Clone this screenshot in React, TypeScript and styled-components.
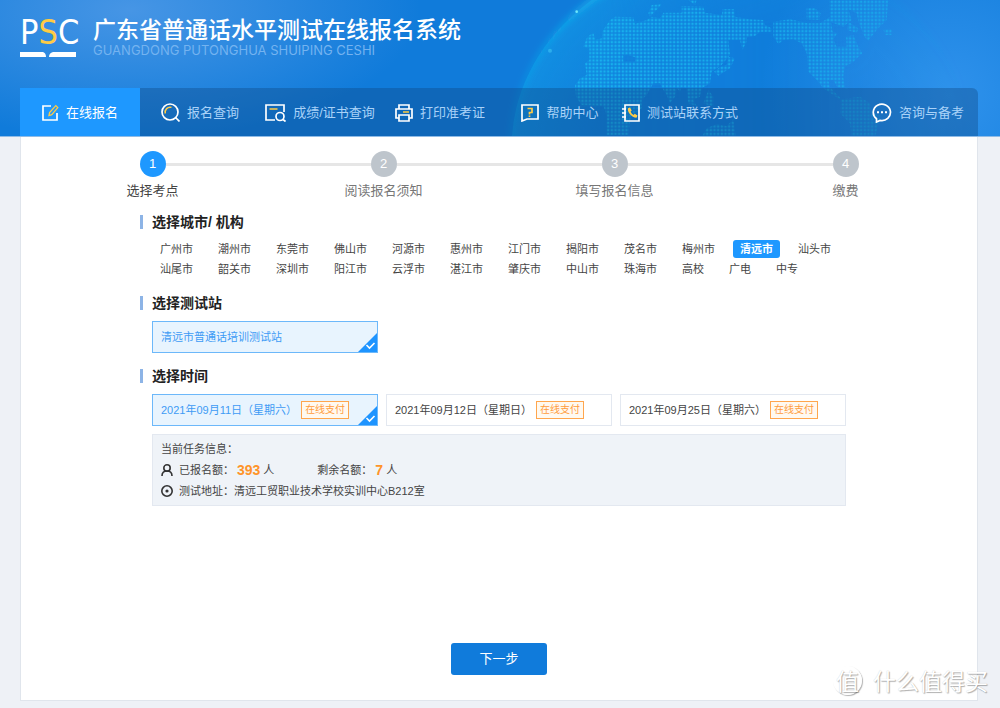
import React, { useState } from 'react';
import styled, { createGlobalStyle, css } from 'styled-components';

const GlobalStyle = createGlobalStyle`
  *, *::before, *::after { box-sizing: border-box; }
  body {
    margin: 0;
    background: #eef1f6;
    color: #333;
    font: 11px/16px "Liberation Sans", "Noto Sans CJK SC", sans-serif;
  }
  button { font: inherit; margin: 0; cursor: pointer; }
  ul, ol, h1, h2, p { margin: 0; padding: 0; list-style: none; font-weight: normal; }
`;

const Page = styled.div`
  position: relative;
  display: flex;
  flex-direction: column;
  min-height: 100vh;
`;

const Header = styled.header`
  position: relative;
  overflow: hidden;
  padding: 16px 22px 0 20px;
  border-bottom: 1px solid #8fbbe6;
  background:
    radial-gradient(ellipse 290px 130px at 130px 10px, rgba(84, 156, 232, 0.8), rgba(84, 156, 232, 0) 100%),
    radial-gradient(circle 190px at calc(100% - 50px) 95px, #2f92ec, rgba(47, 146, 236, 0)),
    #107bda;
`;

const Globe = styled.svg`
  position: absolute;
  top: 0;
  right: 0;
  width: 500px;
  height: 137px;
`;

const Brand = styled.div`
  position: relative;
  display: flex;
  gap: 17px;
  height: 72px;
`;

const Logo = styled.div`
  width: 56px;
  color: #fff;
  font: 34px/32px "DejaVu Sans Condensed", "Noto Sans CJK SC", sans-serif;
`;

const LogoLetters = styled.div`
  height: 36px;
  white-space: nowrap;
  em { color: #ffcb45; font-style: normal; }
`;

const LogoBook = styled.svg`
  display: block;
  width: 56px;
  height: 5px;
`;

const Title = styled.h1`
  color: #fff;
  font: 500 23px/24px "Noto Sans CJK SC", sans-serif;
`;

const Subtitle = styled.p`
  padding-top: 3px;
  color: #74b3f0;
  font: 13px/14px Inter, "Liberation Sans", sans-serif;
`;

const Nav = styled.nav`
  position: relative;
  display: flex;
  height: 48px;
  border-radius: 0 6px 0 0;
  overflow: hidden;
  background: rgba(14, 70, 128, 0.36);
`;

const NavLink = styled.a<{ $active?: boolean; $end?: boolean }>`
  display: flex;
  flex: 0 0 120px;
  align-items: center;
  justify-content: center;
  gap: 7px;
  padding-top: 1px;
  color: ${p => (p.$active ? '#fff' : '#a9d2f8')};
  background: ${p => (p.$active ? '#1e98ff' : 'transparent')};
  font-size: 13px;
  text-decoration: none;
  white-space: nowrap;
  ${p => p.$end && css`margin-left: auto;`}
`;

const NavGlyph = styled.svg.attrs({ strokeWidth: 1.7 })`
  flex: none;
  fill: none;
  stroke: #fff;
  .accent { stroke: #ffcb45; }
`;

const Card = styled.main`
  display: flex;
  flex: 1;
  flex-direction: column;
  margin: 0 22px 7px 20px;
  padding: 14px 16px 25px;
  border: 1px solid #e0e5ec;
  border-top: 0;
  background: #fff;
`;

const Steps = styled.ol`
  display: grid;
  grid-template-columns: repeat(4, 1fr);
`;

const Step = styled.li<{ $active?: boolean }>`
  display: flex;
  flex-direction: column;
  gap: 4px;
  text-align: center;
  font-size: 13px;
  line-height: 20px;
  color: ${p => (p.$active ? '#444' : '#777')};
`;

const StepTrack = styled.div<{ $first?: boolean; $last?: boolean }>`
  display: flex;
  align-items: center;
  &::before, &::after { content: ''; flex: 1; height: 3px; background: #e6e6e6; }
  &::before { visibility: ${p => (p.$first ? 'hidden' : 'visible')}; }
  &::after { visibility: ${p => (p.$last ? 'hidden' : 'visible')}; }
`;

const StepDot = styled.span<{ $active?: boolean }>`
  width: 26px;
  height: 26px;
  border-radius: 50%;
  color: #fff;
  background: ${p => (p.$active ? '#1e98ff' : '#bec5cc')};
  font-size: 13px;
  line-height: 25px;
`;

const Body = styled.div`
  display: flex;
  flex-direction: column;
  padding: 0 115px;
`;

const SectionTitle = styled.h2`
  display: flex;
  align-items: center;
  gap: 9px;
  margin-left: -12px;
  font-size: 14px;
  font-weight: bold;
  line-height: 20px;
  color: #222;
  &::before { content: ''; width: 3px; height: 14px; background: #8db4e6; }
`;

const Section = styled.section`
  display: flex;
  flex-direction: column;
  gap: 8px;
  padding-top: 11px;
  & + & { padding-top: 13px; }
`;

const Cities = styled.ul`
  display: flex;
  flex-wrap: wrap;
  gap: 2px 11px;
  padding-left: 1px;
  padding-bottom: 2px;
`;

const City = styled.button<{ $active?: boolean }>`
  display: block;
  height: 18px;
  padding: 0 7px;
  border: 0;
  border-radius: 3px;
  line-height: 18px;
  color: ${p => (p.$active ? '#fff' : '#444')};
  background: ${p => (p.$active ? '#1e98ff' : 'transparent')};
  font-weight: ${p => (p.$active ? 'bold' : 'normal')};
`;

const Options = styled.div`
  display: grid;
  grid-template-columns: repeat(3, 1fr);
  gap: 8px;
`;

const Option = styled.button<{ $active?: boolean }>`
  position: relative;
  display: flex;
  align-items: center;
  gap: 4px;
  height: 32px;
  padding: 0 8px;
  border: 1px solid ${p => (p.$active ? '#6cb8fa' : '#e3e8f0')};
  color: ${p => (p.$active ? '#3e9bf5' : '#444')};
  background: ${p => (p.$active ? '#e8f4fe' : '#fff')};
  text-align: left;
  white-space: nowrap;
`;

const Corner = styled.svg`
  position: absolute;
  right: 0;
  bottom: 0;
  width: 19px;
  height: 19px;
`;

const Tag = styled.span`
  padding: 0 3px;
  border: 1px solid #ffa64d;
  color: #ff9c3b;
  font-size: 10px;
  line-height: 16px;
  background: #fff9f0;
`;

const Info = styled.div`
  display: flex;
  flex-direction: column;
  gap: 1px;
  height: 72px;
  padding: 4px 8px;
  border: 1px solid #e3e8f0;
  color: #444;
  background: #eff3f8;
`;

const InfoRow = styled.p`
  display: flex;
  align-items: center;
  gap: 3px;
  line-height: 20px;
  svg { flex: none; margin-right: 3px; fill: none; stroke: #333; stroke-width: 1.6; }
  strong { color: #ff9429; font-size: 14px; }
`;

const Remaining = styled.span`
  margin-left: 40px;
`;

const NextButton = styled.button`
  align-self: center;
  width: 96px;
  height: 32px;
  margin-top: auto;
  border: 0;
  border-radius: 3px;
  color: #fff;
  background: #107bdb;
  && { font-size: 13px; }
`;

const Watermark = styled.div`
  position: absolute;
  right: 12px;
  bottom: 12px;
  display: flex;
  align-items: center;
  gap: 11px;
  color: #fff;
  font: 23px/32px "Noto Sans CJK SC", sans-serif;
  text-shadow: 1px 1px 1px rgba(0, 0, 0, 0.3), 0 0 1px rgba(0, 0, 0, 0.2);
  pointer-events: none;
`;

const WatermarkSeal = styled.span`
  width: 29px;
  height: 29px;
  border: 1px solid #fff;
  border-radius: 50%;
  box-shadow: 1px 1px 1px rgba(0, 0, 0, 0.3);
  text-align: center;
  line-height: 26px;
`;

const EditIcon = () => (
  <NavGlyph width="17" height="17" viewBox="0 0 17 17">
    <path d="M9 2H1v14h14V9" />
    <path className="accent" strokeWidth="1.3" d="M7 11.500l.6-3L13.800 1.600l2 2L9.800 10.600z" />
  </NavGlyph>
);
const SearchIcon = () => (
  <NavGlyph width="19" height="19" viewBox="0 0 19 19">
    <circle cx="9" cy="9" r="8" />
    <path d="M14.500 14.500L18.500 18.500" />
    <path className="accent" strokeWidth="1.500" d="M4.300 10.500A5 5 0 0 1 10.500 4.400" />
  </NavGlyph>
);
const CertificateIcon = () => (
  <NavGlyph width="21" height="19" viewBox="0 0 21 19">
    <path d="M10 17H1V2h18v7" />
    <circle cx="15" cy="13.500" r="4" />
    <path d="M18 16.500l2.500 2" />
    <path className="accent" d="M4.500 6h8" />
  </NavGlyph>
);
const PrinterIcon = () => (
  <NavGlyph width="18" height="18" viewBox="0 0 18 18">
    <path d="M4 5V1h10v4M4 14H1V5h16v9h-3" />
    <path d="M4 11h10v6H4z" />
    <path className="accent" d="M8 8h6" />
  </NavGlyph>
);
const HelpIcon = () => (
  <NavGlyph width="18" height="19" viewBox="0 0 18 19">
    <path d="M1 2h16v14H6l-5 2z" />
    <path className="accent" d="M6.500 5.500H11v4H8.500v2M8.500 12.500v1.500" />
  </NavGlyph>
);
const PhoneBookIcon = () => (
  <NavGlyph width="18" height="18" viewBox="0 0 18 18">
    <path d="M3 1h14v16H3zM0 5h4M0 9h4M0 13h4" />
    <path d="M6 4.200c-1 3.500 3.500 9.200 8.500 9.600l1-2.300-2.800-1.700-1.200 1.100C10.200 10.400 9 8.800 8.600 7.600l1.100-1.200L8 3.600z" fill="#ffcb45" stroke="none" />
  </NavGlyph>
);
const ChatIcon = () => (
  <NavGlyph width="20" height="20" viewBox="0 0 20 20">
    <path d="M4.500 19v-3.200A8.600 8.200 0 1 1 8 17.400z" />
    <path d="M5 9.200h2M9 9.200h2M13 9.200h2" strokeWidth="2" />
  </NavGlyph>
);
const PersonIcon = () => (
  <svg width="12" height="12" viewBox="0 0 12 12">
    <circle cx="6" cy="4" r="3.200" />
    <path d="M1 12c0-3 2-5 5-5s5 2 5 5" />
  </svg>
);
const PinIcon = () => (
  <svg width="12" height="12" viewBox="0 0 12 12">
    <circle cx="6" cy="6" r="5.200" />
    <circle cx="6" cy="6" r="0.800" />
  </svg>
);
const Selected = () => (
  <Corner viewBox="0 0 19 19">
    <path d="M19 0v19H0z" fill="#1e94ff" />
    <path d="M8.500 12l3 3 5-5" fill="none" stroke="#fff" strokeWidth="1.600" />
  </Corner>
);

const WorldMap = () => (
  <Globe viewBox="0 0 1500 411" aria-hidden="true">
    <defs>
      <pattern id="dots" width="11" height="11" patternUnits="userSpaceOnUse">
        <rect x="2" y="2" width="7" height="7" fill="#19b4ee" />
      </pattern>
      <linearGradient id="rim" x1="0" y1="0" x2="1" y2="0">
        <stop offset="0" stopColor="#12a8ee" stopOpacity="0.4" />
        <stop offset="0.25" stopColor="#1cd0f6" stopOpacity="0.9" />
        <stop offset="0.6" stopColor="#12a8ee" stopOpacity="0.2" />
        <stop offset="1" stopColor="#12a8ee" stopOpacity="0" />
      </linearGradient>
      <radialGradient id="sea">
        <stop offset="0.6" stopColor="#14a0ea" stopOpacity="0.15" />
        <stop offset="1" stopColor="#14a8ec" stopOpacity="0.45" />
      </radialGradient>
      <linearGradient id="fade" x1="0" x2="1" y1="0" y2="0">
        <stop offset="0" stopColor="#fff" />
        <stop offset="0.5" stopColor="#fff" stopOpacity="0.8" />
        <stop offset="1" stopColor="#fff" stopOpacity="0.5" />
      </linearGradient>
      <linearGradient id="seaFade" x1="0" x2="1" y1="0" y2="0">
        <stop offset="0.2" stopColor="#fff" />
        <stop offset="0.75" stopColor="#fff" stopOpacity="0.1" />
      </linearGradient>
      <mask id="land"><rect width="1500" height="411" fill="url(#fade)" /></mask>
      <mask id="water"><rect width="1500" height="411" fill="url(#seaFade)" /></mask>
      <filter id="soft" x="-20%" y="-20%" width="140%" height="140%"><feGaussianBlur stdDeviation="9" /></filter>
      <filter id="glint" x="-100%" y="-100%" width="300%" height="300%"><feGaussianBlur stdDeviation="2" /></filter>
    </defs>
    <ellipse cx="725" cy="440" rx="690" ry="580" fill="url(#sea)" mask="url(#water)" />
    <ellipse cx="725" cy="440" rx="690" ry="580" fill="none" stroke="url(#rim)" strokeWidth="12" filter="url(#soft)" />
    <circle cx="230" cy="35" r="4" fill="#6ee6fa" filter="url(#glint)" />
    <circle cx="150" cy="152" r="6" fill="#3cc2f4" opacity="0.6" filter="url(#glint)" />
    <g fill="url(#dots)" mask="url(#land)">
      <path fillRule="evenodd" d="M250 140L262 110 280 98 286 120 306 115 308 92 330 60 345 50 400 52 405 72 440 60 455 50 480 55 490 38 545 38 545 18 610 20 615 38 665 45 668 28 702 28 705 50 750 58 790 60 795 75 815 85 815 95 780 95 765 108 740 112 740 125 727 150 720 120 685 120 690 165 665 195 635 215 630 250 605 265 600 290 580 300 590 318 565 310 560 265 545 262 540 275 530 265 525 290 510 310 500 285 490 270 480 250 460 250 440 285 425 300 425 325 392 350 385 405 320 405 320 345 310 318 245 315 228 290 225 255 240 235 260 225 255 190 268 180 268 145ZM370 165V185H405V172L385 165Z" />
      <path d="M660 200L680 195 685 170 705 175 690 205 655 227 642 215ZM445 40L455 15 485 12 470 30 450 50ZM565 0H590L585 16ZM625 270L640 290 640 320 610 310ZM640 335L690 330 700 350 670 355ZM605 411L620 385 650 372 680 378 700 358 708 411Z" />
      <path d="M820 65L870 58 925 70 960 70 990 50 998 95 1012 100 1000 118 1010 140 1040 140 1038 110 1060 105 1075 140 1087 160 1060 185 1035 200 1030 230 1035 262 1048 268 1012 262 1000 240 985 240 990 262 1025 298 1080 290 1110 310 1115 335 1142 348 1125 411 1055 411 1050 370 1020 340 1022 300 970 265 950 240 925 215 920 160 905 130 880 118 850 120 835 132 820 110Z" />
      <path d="M988 0H1165L1160 60 1130 90 1105 122 1094 112 1075 65 1070 40 1045 28 1055 60 1030 80 990 65ZM920 25H945L962 40 958 60 920 58ZM1150 88H1175V105H1155ZM1045 65L1075 85 1070 100 1042 90Z" />
    </g>
  </Globe>
);

const navItems = [
  { label: '在线报名', Icon: EditIcon },
  { label: '报名查询', Icon: SearchIcon },
  { label: '成绩/证书查询', Icon: CertificateIcon },
  { label: '打印准考证', Icon: PrinterIcon },
  { label: '帮助中心', Icon: HelpIcon },
  { label: '测试站联系方式', Icon: PhoneBookIcon },
  { label: '咨询与备考', Icon: ChatIcon },
];

const steps = ['选择考点', '阅读报名须知', '填写报名信息', '缴费'];

const cities = [
  '广州市', '潮州市', '东莞市', '佛山市', '河源市', '惠州市', '江门市', '揭阳市', '茂名市', '梅州市', '清远市', '汕头市',
  '汕尾市', '韶关市', '深圳市', '阳江市', '云浮市', '湛江市', '肇庆市', '中山市', '珠海市', '高校', '广电', '中专',
];

const dates = ['2021年09月11日（星期六）', '2021年09月12日（星期日）', '2021年09月25日（星期六）'];

export default function App() {
  const [city, setCity] = useState('清远市');
  const [date, setDate] = useState(dates[0]);

  return (
    <Page lang="zh-CN">
      <GlobalStyle />
      <Header>
        <WorldMap />
        <Brand>
          <Logo>
            <LogoLetters>P<em>S</em>C</LogoLetters>
            <LogoBook viewBox="0 0 56 5">
              <path d="M0 0h23q3 1 3 5H0zM56 0H33q-4 1-4 5h27z" fill="#fff" />
            </LogoBook>
          </Logo>
          <div>
            <Title>广东省普通话水平测试在线报名系统</Title>
            <Subtitle>GUANGDONG PUTONGHUA SHUIPING CESHI</Subtitle>
          </div>
        </Brand>
        <Nav>
          {navItems.map(({ label, Icon }, i) => (
            <NavLink key={label} href="#" $active={i === 0} $end={i === navItems.length - 1}>
              <Icon />
              {label}
            </NavLink>
          ))}
        </Nav>
      </Header>

      <Card>
        <Steps>
          {steps.map((label, i) => (
            <Step key={label} $active={i === 0}>
              <StepTrack $first={i === 0} $last={i === steps.length - 1}>
                <StepDot $active={i === 0}>{i + 1}</StepDot>
              </StepTrack>
              {label}
            </Step>
          ))}
        </Steps>

        <Body>
          <Section>
            <SectionTitle>选择城市/ 机构</SectionTitle>
            <Cities>
              {cities.map(name => (
                <li key={name}>
                  <City type="button" aria-pressed={name === city} $active={name === city} onClick={() => setCity(name)}>
                    {name}
                  </City>
                </li>
              ))}
            </Cities>
          </Section>

          <Section>
            <SectionTitle>选择测试站</SectionTitle>
            <Options>
              <Option type="button" aria-pressed $active>
                清远市普通话培训测试站
                <Selected />
              </Option>
            </Options>
          </Section>

          <Section>
            <SectionTitle>选择时间</SectionTitle>
            <Options>
              {dates.map(d => (
                <Option key={d} type="button" aria-pressed={d === date} $active={d === date} onClick={() => setDate(d)}>
                  {d}
                  <Tag>在线支付</Tag>
                  {d === date && <Selected />}
                </Option>
              ))}
            </Options>
            <Info>
              <InfoRow>当前任务信息：</InfoRow>
              <InfoRow>
                <PersonIcon />
                已报名额：<strong>393</strong>人
                <Remaining>剩余名额：</Remaining><strong>7</strong>人
              </InfoRow>
              <InfoRow>
                <PinIcon />
                测试地址：清远工贸职业技术学校实训中心B212室
              </InfoRow>
            </Info>
          </Section>
        </Body>

        <NextButton type="button">下一步</NextButton>
      </Card>

      <Watermark>
        <WatermarkSeal>值</WatermarkSeal>
        什么值得买
      </Watermark>
    </Page>
  );
}
